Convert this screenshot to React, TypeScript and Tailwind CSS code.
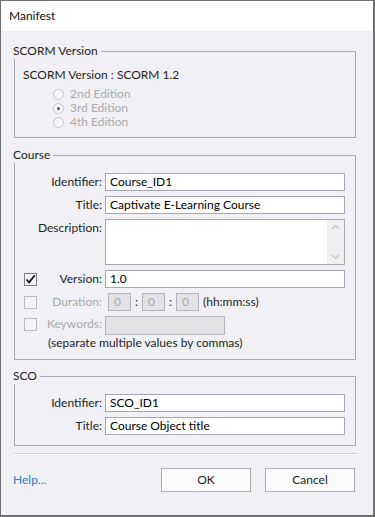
import type { ReactNode } from "react";

const Group = ({ title, className, children }: { title: string; className?: string; children: ReactNode }) => (
  <div className={`relative border border-[#a8a8b0] ${className ?? ""}`}>
    <span className="absolute -top-[9px] -left-[2px] bg-[#f0f0f5] pr-[3px] leading-4 text-[#1e1e1e]">{title}</span>
    {children}
  </div>
);

const Radio = ({ label, checked }: { label: string; checked?: boolean }) => (
  <div className="flex items-center h-[14px] gap-[6px]">
    <span className="w-[11px] h-[11px] rounded-full border border-[#c4c4ca] bg-[#f6f6f8] flex items-center justify-center">
      {checked && <span className="w-[3px] h-[3px] rounded-full bg-[#5a5a5a]" />}
    </span>
    <span className="text-[#ababab]">{label}</span>
  </div>
);

const Check = ({ checked }: { checked?: boolean }) => (
  <span
    className={`w-[13px] h-[13px] border flex items-center justify-center ${
      checked ? "border-[#7e7e86] bg-[#f4f4f6]" : "border-[#b8b8c0] bg-[#f4f4f8]"
    }`}
  >
    {checked && (
      <svg width="11" height="11" viewBox="0 0 11 11">
        <path d="M1.5 5.5 L4.2 8.3 L9.8 1.2" fill="none" stroke="#111" strokeWidth="1.8" />
      </svg>
    )}
  </span>
);

const Field = ({
  label,
  value,
  check,
  checked,
  disabled,
}: {
  label: string;
  value?: string;
  check?: boolean;
  checked?: boolean;
  disabled?: boolean;
}) => (
  <div className="flex items-center h-[18px]">
    <div className="w-[90px] flex items-center pl-[9px] pr-[3px]">
      {check && <Check checked={checked} />}
      <span className={`ml-auto ${disabled ? "text-[#a9a9a9]" : "text-[#1e1e1e]"}`}>{label}</span>
    </div>
    <div className="flex-1 h-[18px] border border-[#a7a7b1] bg-white pl-[4px] flex items-center text-black">{value}</div>
  </div>
);

const TimeBox = () => (
  <div className="w-[23px] h-[18px] border border-[#b2b2b8] bg-[#e3e3e6] pl-[5px] flex items-center text-[#a9a9a9]">0</div>
);

export default function App() {
  return (
    <div
      className="w-[375px] h-[517px] border border-[#707070] border-r-2 border-b-2 bg-[#f0f0f5] flex flex-col text-[12px] leading-4"
      style={{ fontFamily: "Lato, 'Noto Sans', sans-serif" }}
    >
      <div className="h-[30px] bg-white pl-2 flex items-center text-[#111]">Manifest</div>

      <div className="flex flex-col pl-[13px] pr-[17px]">
        <Group title="SCORM Version" className="mt-[20px] pt-[15px] pl-[8px] pb-[8px]">
          <div className="text-[#1e1e1e]">SCORM Version : SCORM 1.2</div>
          <div className="mt-[4px] pl-[30px] flex flex-col">
            <Radio label="2nd Edition" />
            <Radio label="3rd Edition" checked />
            <Radio label="4th Edition" />
          </div>
        </Group>

        <Group title="Course" className="mt-[17px] pt-[17px] pr-[10px] pb-[8px]">
          <div className="flex flex-col gap-[5px]">
            <Field label="Identifier:" value="Course_ID1" />
            <Field label="Title:" value="Captivate E-Learning Course" />
            <div className="flex">
              <div className="w-[90px] pr-[3px] pt-[1px] text-right text-[#1e1e1e]">Description:</div>
              <div className="flex-1 h-[46px] border border-[#a7a7b1] bg-white flex justify-end">
                <div className="w-[17px] bg-[#f0f0f0] flex flex-col justify-between items-center py-[4px]">
                  <svg width="9" height="6" viewBox="0 0 9 6">
                    <path d="M1 5 L4.5 1.5 L8 5" fill="none" stroke="#c2c2c2" strokeWidth="1.2" />
                  </svg>
                  <svg width="9" height="6" viewBox="0 0 9 6">
                    <path d="M1 1 L4.5 4.5 L8 1" fill="none" stroke="#c2c2c2" strokeWidth="1.2" />
                  </svg>
                </div>
              </div>
            </div>
            <Field label="Version:" value="1.0" check checked />
            <div className="flex items-center h-[18px]">
              <div className="w-[93px] flex items-center pl-[9px] pr-[6px]">
                <Check />
                <span className="ml-auto text-[#a9a9a9]">Duration:</span>
              </div>
              <TimeBox />
              <span className="w-[11px] text-center text-[#1e1e1e]">:</span>
              <TimeBox />
              <span className="w-[11px] text-center text-[#1e1e1e]">:</span>
              <TimeBox />
              <span className="ml-[4px] text-[#1e1e1e]">(hh:mm:ss)</span>
            </div>
            <div className="flex flex-col">
              <div className="flex items-start h-[18px]">
                <div className="w-[90px] flex items-center pl-[9px] pr-[3px]">
                  <Check />
                  <span className="ml-auto text-[#a9a9a9]">Keywords:</span>
                </div>
                <div className="w-[120px] h-[19px] border border-[#b2b2b8] bg-[#e3e3e6]" />
              </div>
              <div className="pl-[33px] mt-[1px] text-[#1e1e1e]">(separate multiple values by commas)</div>
            </div>
          </div>
        </Group>

        <Group title="SCO" className="mt-[16px] pt-[17px] pr-[10px] pb-[10px]">
          <div className="flex flex-col gap-[5px]">
            <Field label="Identifier:" value="SCO_ID1" />
            <Field label="Title:" value="Course Object title" />
          </div>
        </Group>

        <div className="mt-[7px] -mx-[1px] border-t border-b border-t-[#d3d3d9] border-b-white" />

        <div className="mt-[13px] flex items-center">
          <span className="-ml-[1px] text-[#2f7ec1]">Help...</span>
          <button className="ml-auto w-[90px] h-[24px] border border-[#adadb3] bg-[#fbfbfc] text-[#1e1e1e]">OK</button>
          <button className="ml-[14px] mr-[1px] w-[90px] h-[24px] border border-[#adadb3] bg-[#fbfbfc] text-[#1e1e1e]">
            Cancel
          </button>
        </div>
      </div>
    </div>
  );
}
